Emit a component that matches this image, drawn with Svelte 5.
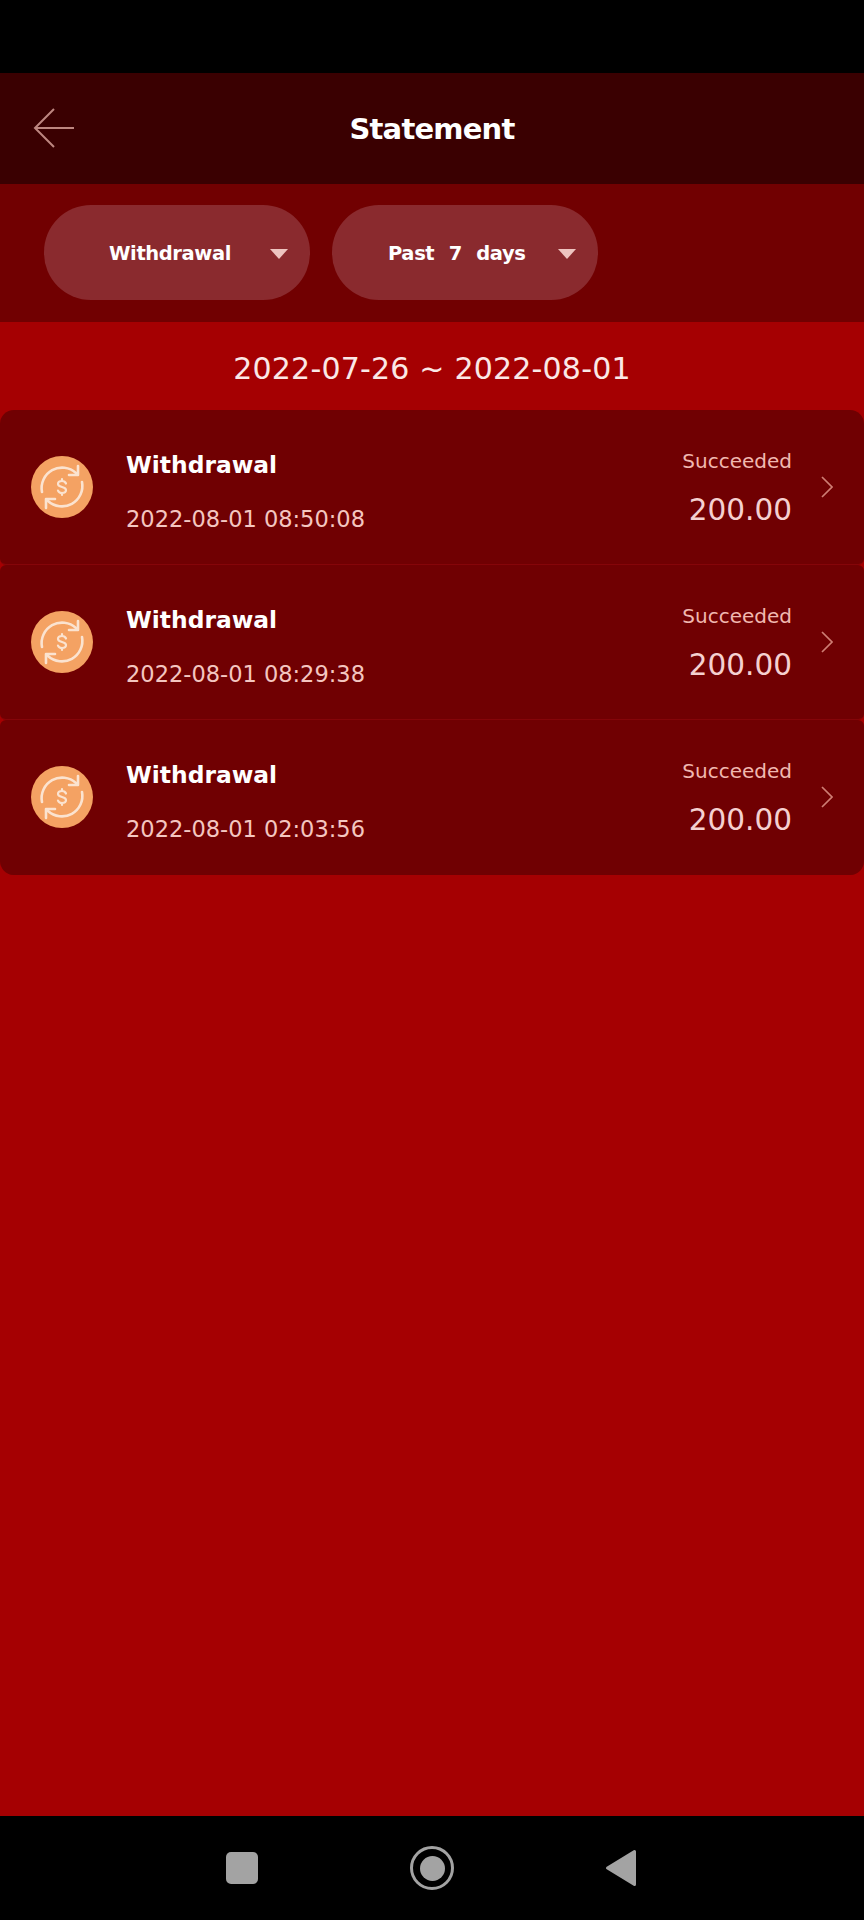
<script>
	const rows = [
		{ time: '2022-08-01 08:50:08' },
		{ time: '2022-08-01 08:29:38' },
		{ time: '2022-08-01 02:03:56' }
	];
	const filters = ['Withdrawal', 'Past 7 days'];
</script>

<div class="page">
	<div class="status"></div>

	<header>
		<svg class="back" width="42" height="42" viewBox="0 0 42 42" fill="none" stroke="#bd8680" stroke-width="2">
			<path d="M21 2 L2 21 L21 40 M2 21 H41" />
		</svg>
		<h1>Statement</h1>
	</header>

	<div class="filters">
		{#each filters as f}
			<div class="pill">
				<span>{f}</span>
				<i class="caret"></i>
			</div>
		{/each}
	</div>

	<div class="range">2022-07-26 ~ 2022-08-01</div>

	<ul>
		{#each rows as r}
			<li>
				<svg class="coin" width="62" height="62" viewBox="0 0 62 62" fill="none">
					<circle cx="31" cy="31" r="31" fill="#f4a263" />
					<g stroke="#fbe3d0" stroke-width="2.6" stroke-linecap="round" stroke-linejoin="round">
						<path d="M11 36 A20.5 20.5 0 0 1 45 17" />
						<path d="M51 26 A20.5 20.5 0 0 1 17 45" />
						<path d="M47 10 L47 19 L38 19" />
						<path d="M15 52 L15 43 L24 43" />
						<path stroke-width="2.2" d="M35 27.5 C34.4 26 33 25 31 25 C28.6 25 27 26.3 27 28 C27 32 35 30 35 34 C35 35.8 33.4 37 31 37 C29 37 27.6 36.2 27 34.6 M31 23 V25 M31 37 V39" />
					</g>
				</svg>
				<div class="info">
					<div class="name">Withdrawal</div>
					<div class="time">{r.time}</div>
				</div>
				<div class="result">
					<div class="state">Succeeded</div>
					<div class="amount">200.00</div>
				</div>
				<svg class="chev" width="12" height="22" viewBox="0 0 12 22" fill="none" stroke="#cf7d74" stroke-width="1.7">
					<path d="M1 1 L11 11 L1 21" />
				</svg>
			</li>
		{/each}
	</ul>

	<div class="fill"></div>

	<nav>
		<span class="square"></span>
		<span class="ring"><span class="dot"></span></span>
		<svg width="32" height="38" viewBox="0 0 32 38" fill="#a3a3a3" stroke="#a3a3a3" stroke-width="3" stroke-linejoin="round">
			<path d="M2.5 19 L29.5 2.5 V35.5 Z" />
		</svg>
	</nav>
</div>

<style>
	:global(body) {
		margin: 0;
		background: #000;
	}
	.page {
		width: 864px;
		height: 1920px;
		display: flex;
		flex-direction: column;
		font-family: "DejaVu Sans", sans-serif;
		background: #a50002;
		color: #fff;
	}
	.status {
		height: 73px;
		background: #000;
	}
	header {
		height: 111px;
		background: #3a0001;
		position: relative;
		display: flex;
		align-items: center;
		justify-content: center;
	}
	.back {
		position: absolute;
		left: 33px;
		top: 34px;
	}
	h1 {
		margin: 0;
		font-size: 29px;
		font-weight: 700;
		letter-spacing: -0.8px;
	}
	.filters {
		height: 138px;
		box-sizing: border-box;
		padding: 21px 44px 0;
		display: flex;
		gap: 22px;
		background: #710001;
	}
	.pill {
		width: 266px;
		height: 95px;
		border-radius: 47px;
		background: #8a2a2e;
		position: relative;
		display: flex;
		align-items: center;
		font-size: 19.5px;
		font-weight: 700;
	}
	.pill span {
		margin-left: 65px;
		margin-top: 2px;
		letter-spacing: -0.4px;
	}
	.pill:nth-child(2) span {
		margin-left: 56px;
		word-spacing: 8px;
	}
	.caret {
		position: absolute;
		right: 22px;
		top: 44px;
		border-left: 9px solid transparent;
		border-right: 9px solid transparent;
		border-top: 10px solid #eec4c0;
	}
	.range {
		height: 88px;
		padding-top: 4px;
		box-sizing: border-box;
		display: flex;
		align-items: center;
		justify-content: center;
		font-size: 30px;
		letter-spacing: 0.2px;
		color: #fbe8e6;
	}
	ul {
		margin: 0;
		padding: 0;
		list-style: none;
		border-radius: 14px;
		overflow: hidden;
	}
	li {
		height: 155px;
		box-sizing: border-box;
		display: flex;
		align-items: center;
		padding-left: 31px;
		background: #700002;
		border-radius: 6px;
		border-bottom: 1px solid #850509;
	}
	li:last-child {
		border-bottom-color: #700002;
	}
	.coin {
		flex: none;
	}
	.info {
		margin-left: 33px;
		flex: 1;
	}
	.name {
		font-size: 23.4px;
		font-weight: 700;
		line-height: 30px;
		margin-top: 6px;
	}
	.time {
		margin-top: 27px;
		font-size: 22.5px;
		line-height: 24px;
		color: #f4c6c0;
	}
	.result {
		text-align: right;
	}
	.state {
		font-size: 20px;
		line-height: 24px;
		color: #f0b8b0;
		margin-top: 0;
	}
	.amount {
		margin-top: 22px;
		font-size: 29.5px;
		line-height: 30px;
		color: #f5d0d0;
	}
	.chev {
		flex: none;
		margin: 0 31px 0 29px;
	}
	.fill {
		flex: 1;
	}
	nav {
		height: 104px;
		background: #000;
		box-sizing: border-box;
		padding-left: 226px;
		display: flex;
		align-items: center;
	}
	.square {
		width: 32px;
		height: 32px;
		border-radius: 5px;
		background: #a3a3a3;
		margin-right: 152px;
	}
	.ring {
		width: 44px;
		height: 44px;
		box-sizing: border-box;
		border: 3px solid #a3a3a3;
		border-radius: 50%;
		display: flex;
		align-items: center;
		justify-content: center;
		margin-right: 151px;
	}
	.dot {
		width: 25px;
		height: 25px;
		border-radius: 50%;
		background: #a3a3a3;
	}
</style>
